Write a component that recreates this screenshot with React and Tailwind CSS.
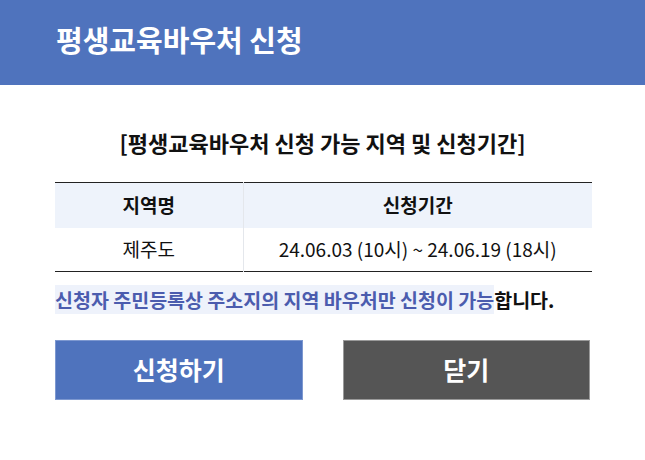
import React from 'react'

export default function App() {
  const font = { fontFamily: '"Noto Sans CJK KR", "Noto Sans", sans-serif' }
  return (
    <div className="w-[645px] h-[460px] bg-white" style={font}>
      <div className="h-[85px] bg-[#4f73bd] flex items-center px-[56px]">
        <h1 className="text-[29px] font-bold text-white leading-none -mt-[6px]">평생교육바우처 신청</h1>
      </div>

      <div className="px-[55px] pt-[40px]">
        <h2 className="text-center text-[22px] font-bold text-[#111] leading-[34px]">
          [평생교육바우처 신청 가능 지역 및 신청기간]
        </h2>

        <table className="w-[537px] mt-[23px] border-t border-b border-[#222] text-[19px] text-[#111]">
          <thead>
            <tr className="bg-[#eef3fb] h-[45px]">
              <th className="w-[188px] font-bold border-r border-[#e4e7ec]">지역명</th>
              <th className="font-bold">신청기간</th>
            </tr>
          </thead>
          <tbody>
            <tr className="h-[44px]">
              <td className="text-center border-r border-[#e4e7ec]">제주도</td>
              <td className="text-center">24.06.03 (10시) ~ 24.06.19 (18시)</td>
            </tr>
          </tbody>
        </table>

        <p className="mt-[14px] text-[19.5px] font-bold leading-[28px] text-[#111]">
          <span className="text-[#4b5cae] bg-[#eef2fb]">신청자 주민등록상 주소지의 지역 바우처만 신청이 가능</span>
          합니다.
        </p>

        <div className="mt-[26px] flex">
          <button className="w-[248px] h-[60px] bg-[#4f73bd] border border-[#7d98d0] text-white text-[25px] font-bold">
            신청하기
          </button>
          <button className="ml-[40px] w-[248px] h-[60px] bg-[#555555] border border-[#9a9a9a] text-white text-[25px] font-bold">
            닫기
          </button>
        </div>
      </div>
    </div>
  )
}
